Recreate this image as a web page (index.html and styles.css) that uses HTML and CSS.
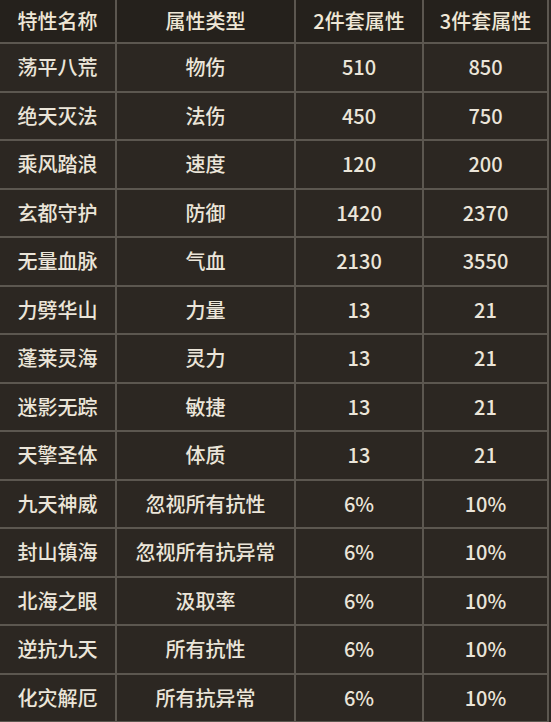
FILE: index.html
```html
<!DOCTYPE html>
<html lang="zh-CN">
<head>
<meta charset="utf-8">
<title>特性属性表</title>
<link rel="stylesheet" href="styles.css">
</head>
<body>
<div class="table">
  <div class="cell head">特性名称</div><div class="cell head">属性类型</div><div class="cell head">2件套属性</div><div class="cell head">3件套属性</div>
  <div class="cell">荡平八荒</div><div class="cell">物伤</div><div class="cell">510</div><div class="cell">850</div>
  <div class="cell">绝天灭法</div><div class="cell">法伤</div><div class="cell">450</div><div class="cell">750</div>
  <div class="cell">乘风踏浪</div><div class="cell">速度</div><div class="cell">120</div><div class="cell">200</div>
  <div class="cell">玄都守护</div><div class="cell">防御</div><div class="cell">1420</div><div class="cell">2370</div>
  <div class="cell">无量血脉</div><div class="cell">气血</div><div class="cell">2130</div><div class="cell">3550</div>
  <div class="cell">力劈华山</div><div class="cell">力量</div><div class="cell">13</div><div class="cell">21</div>
  <div class="cell">蓬莱灵海</div><div class="cell">灵力</div><div class="cell">13</div><div class="cell">21</div>
  <div class="cell">迷影无踪</div><div class="cell">敏捷</div><div class="cell">13</div><div class="cell">21</div>
  <div class="cell">天擎圣体</div><div class="cell">体质</div><div class="cell">13</div><div class="cell">21</div>
  <div class="cell">九天神威</div><div class="cell">忽视所有抗性</div><div class="cell">6%</div><div class="cell">10%</div>
  <div class="cell">封山镇海</div><div class="cell">忽视所有抗异常</div><div class="cell">6%</div><div class="cell">10%</div>
  <div class="cell">北海之眼</div><div class="cell">汲取率</div><div class="cell">6%</div><div class="cell">10%</div>
  <div class="cell">逆抗九天</div><div class="cell">所有抗性</div><div class="cell">6%</div><div class="cell">10%</div>
  <div class="cell">化灾解厄</div><div class="cell">所有抗异常</div><div class="cell">6%</div><div class="cell">10%</div>
</div>
</body>
</html>
```
FILE: styles.css
```css
html, body {
  margin: 0;
  padding: 0;
  background: #2b2621;
  overflow: hidden;
  height: 722px;
}
.table {
  width: 547px;
  display: grid;
  grid-template-columns: 115px 177px 126px 123px;
  grid-template-rows: 42px repeat(14, 46.5px);
  gap: 2px;
  padding-right: 2px;
  padding-bottom: 2px;
  background: #5c5750;
  font-family: "Noto Sans CJK SC", "Noto Sans", sans-serif;
  font-size: 20px;
  font-weight: 500;
  color: #ebe5d9;
}
.cell {
  display: flex;
  align-items: center;
  justify-content: center;
  background: #2c2722;
  line-height: 1;
  white-space: nowrap;
}
.head {
  background: #25211c;
  color: #efe7d6;
}
```
